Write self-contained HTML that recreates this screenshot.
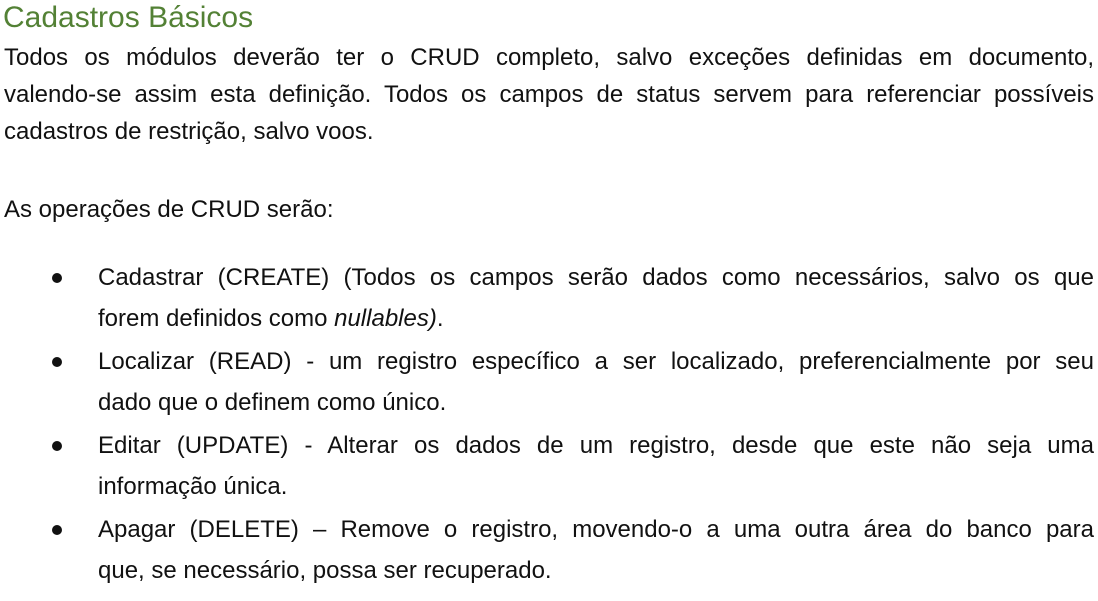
<!DOCTYPE html>
<html><head><meta charset="utf-8"><style>
html,body{margin:0;padding:0;background:#fff;width:1098px;height:601px;overflow:hidden;position:relative}
.l{position:absolute;font-family:"Liberation Sans",sans-serif;font-size:24px;line-height:30px;height:30px;color:#111;white-space:nowrap}
.j{text-align:justify;text-align-last:justify}
.p{left:4px;width:1090px}
.b{left:98px;width:996px}
.h{position:absolute;left:3px;top:0;font-family:"Liberation Sans",sans-serif;font-size:30px;line-height:36px;color:#538135;white-space:nowrap}
.d{position:absolute;left:52px;width:10px;height:10px;border-radius:50%;background:#111}
</style></head><body>
<div class="h">Cadastros Básicos</div>
<div class="l p j" style="top:43px">Todos os módulos deverão ter o CRUD completo, salvo exceções definidas em documento,</div>
<div class="l p j" style="top:80px">valendo-se assim esta definição. Todos os campos de status servem para referenciar possíveis</div>
<div class="l p" style="top:117px">cadastros de restrição, salvo voos.</div>
<div class="l p" style="top:195px">As operações de CRUD serão:</div>

<div class="d" style="top:273px"></div>
<div class="l b j" style="top:263px">Cadastrar (CREATE) (Todos os campos serão dados como necessários, salvo os que</div>
<div class="l b" style="top:304px">forem definidos como <i>nullables)</i>.</div>

<div class="d" style="top:357px"></div>
<div class="l b j" style="top:347px">Localizar (READ) - um registro específico a ser localizado, preferencialmente por seu</div>
<div class="l b" style="top:388px">dado que o definem como único.</div>

<div class="d" style="top:441px"></div>
<div class="l b j" style="top:431px">Editar (UPDATE) - Alterar os dados de um registro, desde que este não seja uma</div>
<div class="l b" style="top:472px">informação única.</div>

<div class="d" style="top:525px"></div>
<div class="l b j" style="top:515px">Apagar (DELETE) – Remove o registro, movendo-o a uma outra área do banco para</div>
<div class="l b" style="top:556px">que, se necessário, possa ser recuperado.</div>
</body></html>
